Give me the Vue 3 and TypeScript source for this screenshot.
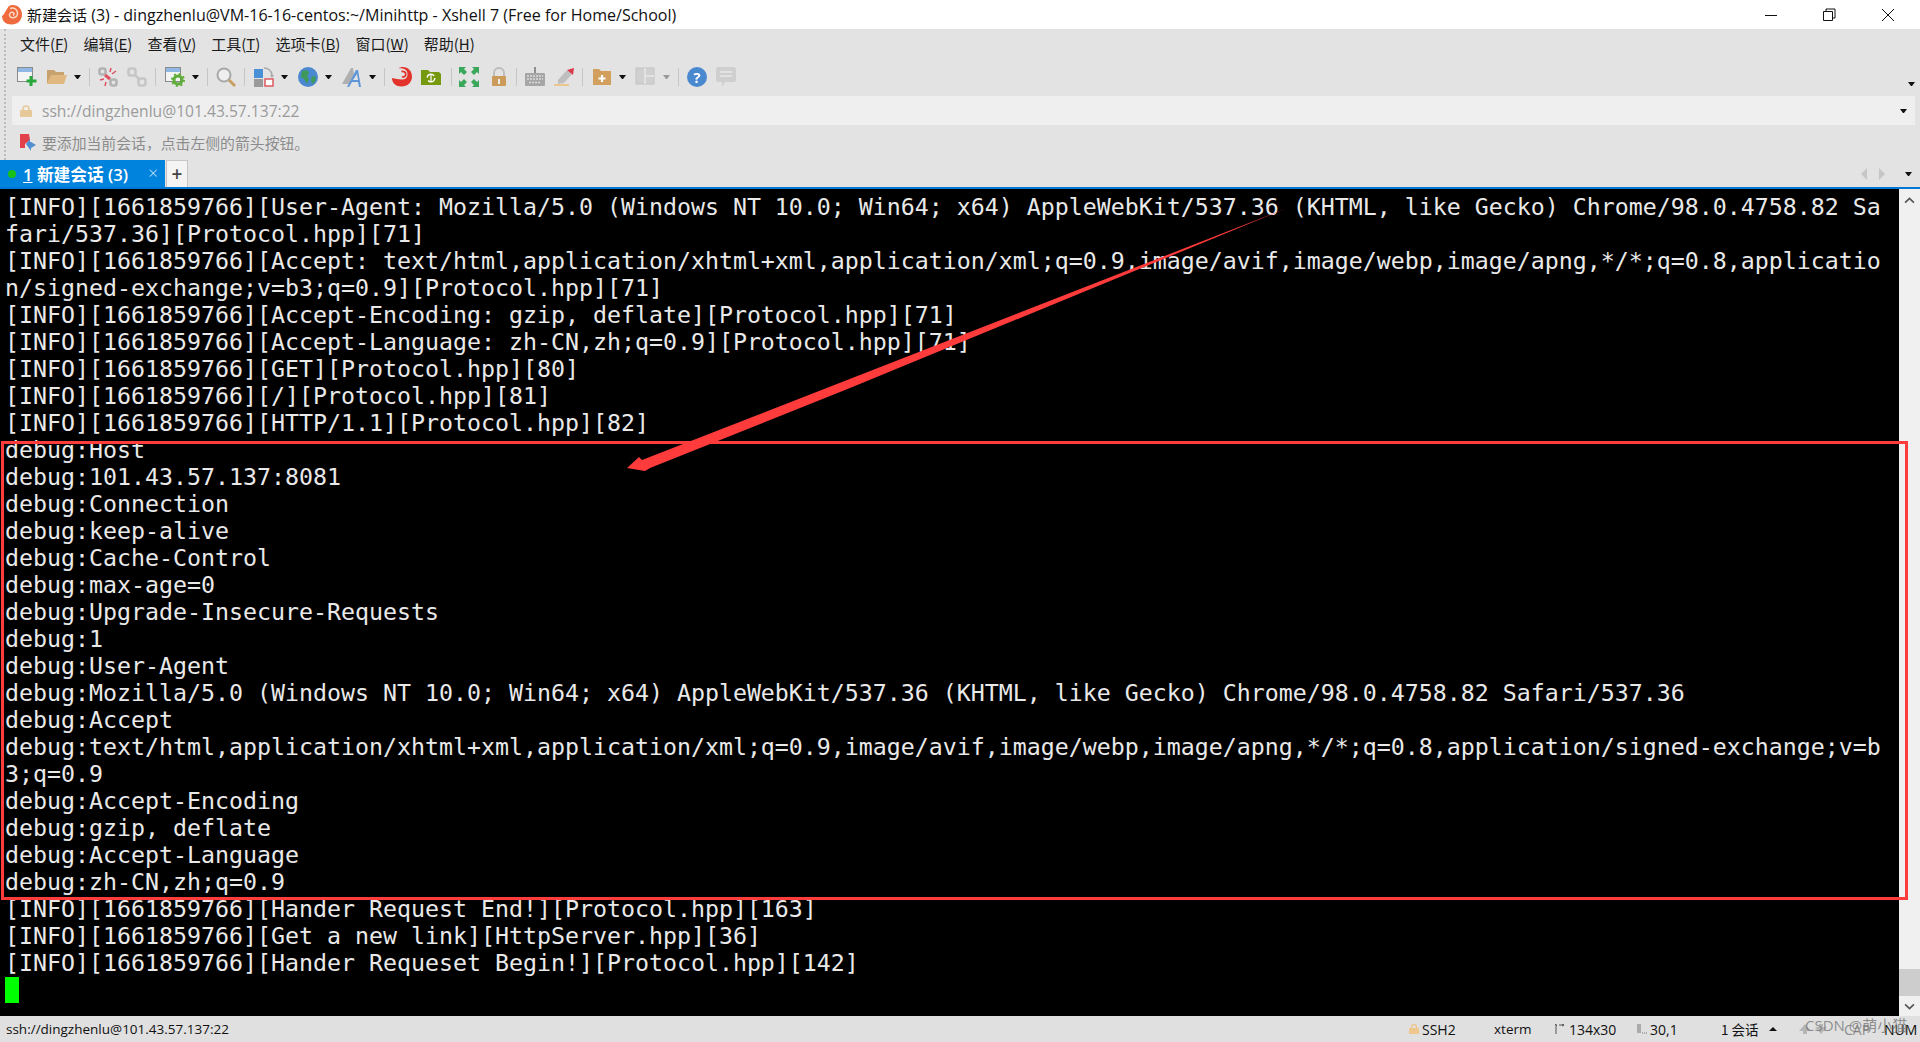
<script setup lang="ts">
const menus: { key: string; label: string; hot: string }[] = [
  { key: 'f', label: '文件', hot: 'F' },
  { key: 'e', label: '编辑', hot: 'E' },
  { key: 'v', label: '查看', hot: 'V' },
  { key: 't', label: '工具', hot: 'T' },
  { key: 'b', label: '选项卡', hot: 'B' },
  { key: 'w', label: '窗口', hot: 'W' },
  { key: 'h', label: '帮助', hot: 'H' },
]

const rows: string[] = [
  '[INFO][1661859766][User-Agent: Mozilla/5.0 (Windows NT 10.0; Win64; x64) AppleWebKit/537.36 (KHTML, like Gecko) Chrome/98.0.4758.82 Sa',
  'fari/537.36][Protocol.hpp][71]',
  '[INFO][1661859766][Accept: text/html,application/xhtml+xml,application/xml;q=0.9,image/avif,image/webp,image/apng,*/*;q=0.8,applicatio',
  'n/signed-exchange;v=b3;q=0.9][Protocol.hpp][71]',
  '[INFO][1661859766][Accept-Encoding: gzip, deflate][Protocol.hpp][71]',
  '[INFO][1661859766][Accept-Language: zh-CN,zh;q=0.9][Protocol.hpp][71]',
  '[INFO][1661859766][GET][Protocol.hpp][80]',
  '[INFO][1661859766][/][Protocol.hpp][81]',
  '[INFO][1661859766][HTTP/1.1][Protocol.hpp][82]',
  'debug:Host',
  'debug:101.43.57.137:8081',
  'debug:Connection',
  'debug:keep-alive',
  'debug:Cache-Control',
  'debug:max-age=0',
  'debug:Upgrade-Insecure-Requests',
  'debug:1',
  'debug:User-Agent',
  'debug:Mozilla/5.0 (Windows NT 10.0; Win64; x64) AppleWebKit/537.36 (KHTML, like Gecko) Chrome/98.0.4758.82 Safari/537.36',
  'debug:Accept',
  'debug:text/html,application/xhtml+xml,application/xml;q=0.9,image/avif,image/webp,image/apng,*/*;q=0.8,application/signed-exchange;v=b',
  '3;q=0.9',
  'debug:Accept-Encoding',
  'debug:gzip, deflate',
  'debug:Accept-Language',
  'debug:zh-CN,zh;q=0.9',
  '[INFO][1661859766][Hander Request End!][Protocol.hpp][163]',
  '[INFO][1661859766][Get a new link][HttpServer.hpp][36]',
  '[INFO][1661859766][Hander Requeset Begin!][Protocol.hpp][142]',
]
</script>

<template>
  <div class="app">
    <header class="title">
      <svg class="logo" viewBox="0 0 20 20">
        <path d="M0 11c0 5 4 8.500 9.500 8.500C15.500 19.500 20 15.500 20 9.500 20 4 16 0 11 0 9 0 7.500.5 6.500 1.500 3.500 6 2 10 0 11z" fill="#ef6a3c" />
        <path d="M8 3.500c4-1.500 8 1 7.500 5.500-.5 3.500-5 5-7.500 2.500C6.500 9.500 8.500 6.500 11 7.500c1.500.6 1.300 2.500 0 3" fill="none" stroke="#ffd9c4" stroke-width="1.500" />
      </svg>
      <span class="title-text"><span class="cjk">新建会话</span> (3) - dingzhenlu@VM-16-16-centos:~/Minihttp - Xshell 7 (Free for Home/School)</span>
      <div class="win">
        <span class="win-btn"><svg width="14" height="14" viewBox="0 0 14 14"><path d="M1 7.500h12" stroke="#111" fill="none" /></svg></span>
        <span class="win-btn"><svg width="14" height="14" viewBox="0 0 14 14"><path d="M1.500 3.500h9v9h-9zM4 3.500v-2.500h9v9h-2.500" stroke="#111" fill="none" /></svg></span>
        <span class="win-btn"><svg width="14" height="14" viewBox="0 0 14 14"><path d="M1 1l12 12M13 1L1 13" stroke="#111" fill="none" /></svg></span>
      </div>
    </header>

    <section class="chrome">
      <i class="grip"></i>
      <nav class="menu">
        <span v-for="m in menus" :key="m.key" class="menu-item">{{ m.label }}(<u>{{ m.hot }}</u>)</span>
      </nav>

      <div class="toolbar">
        <svg class="ic" viewBox="0 0 20 20"><rect x=".5" y=".5" width="15" height="14" fill="#f4f4f4" stroke="#8a8a8a" /><rect x="1" y="1" width="14" height="4" fill="#8fb8e4" /><path d="M14 9v10M9.500 14h10" stroke="#27a83a" stroke-width="3" /></svg>
        <svg class="ic m10" viewBox="0 0 20 20"><path d="M0 3h7l2 2h8v3H5L0 17z" fill="#c8a26e" /><path d="M0 17l4-9h16l-3 9z" fill="#e0b880" /></svg>
        <i class="caret m7"></i>
        <i class="sep m8"></i>
        <svg class="ic m8" viewBox="0 0 20 20"><g fill="none" stroke="#b3b3b3" stroke-width="2.600"><rect x="1.500" y="1.500" width="6" height="6" rx="2" /><rect x="12.500" y="12.500" width="6" height="6" rx="2" /></g><path d="M7 8l5 4" stroke="#e05060" stroke-width="3" /><path d="M13 1l-1 4M18 4l-4 3M2 13l4-1M7 19l1-4" stroke="#e05060" stroke-width="1.500" /></svg>
        <svg class="ic m9 faded" viewBox="0 0 20 20"><g fill="none" stroke="#bbb" stroke-width="2.600"><rect x="1.500" y="1.500" width="7" height="7" rx="2" /><rect x="11.500" y="11.500" width="7" height="7" rx="2" /><path d="M7 7l6 6" /></g></svg>
        <i class="sep m8"></i>
        <svg class="ic m9" viewBox="0 0 20 20"><rect x=".5" y=".5" width="15" height="14" fill="#f4f4f4" stroke="#8a8a8a" /><rect x="1" y="1" width="14" height="4" fill="#8fb8e4" /><circle cx="13" cy="13" r="4" fill="none" stroke="#5fae3a" stroke-width="3" /><circle cx="13" cy="13" r="6" fill="none" stroke="#5fae3a" stroke-width="2" stroke-dasharray="2 2.700" /></svg>
        <i class="caret m7"></i>
        <i class="sep m8"></i>
        <svg class="ic m8" viewBox="0 0 20 20"><circle cx="8" cy="8" r="6.500" fill="#efefef" stroke="#a8a8a8" stroke-width="2" /><path d="M13 13l6 6" stroke="#c9a064" stroke-width="3" /></svg>
        <i class="sep m8"></i>
        <svg class="ic m9" viewBox="0 0 20 20"><rect y="2" width="9" height="9" fill="#4a90d6" /><rect y="12" width="9" height="8" fill="#9a9a9a" /><rect x="11" y="12" width="8" height="7" fill="#fff" stroke="#dd5a60" stroke-width="1.500" /><path d="M10 1c4 0 7 2 8 7" fill="none" stroke="#a9a9a9" stroke-width="1.500" /><path d="M16 8h4l-2 3z" fill="#a9a9a9" /></svg>
        <i class="caret m7"></i>
        <svg class="ic m10" viewBox="0 0 20 20"><circle cx="10" cy="10" r="10" fill="#4a88d0" /><path d="M4 4l5-1 2 3-2 3 2 3-2 5-3-5-3-2zM14 9l4 1-1 5-3 2-1-4z" fill="#3f9a5a" /></svg>
        <i class="caret m7"></i>
        <svg class="ic m10" viewBox="0 0 20 20"><path d="M0 17L9 1h2l1 6-5 10" fill="#b0b0b0" /><path d="M5 20L14 3h2l3 17h-2l-1-5h-6l-3 5zM11 13h5l-1-6z" fill="#5f96d8" fill-rule="evenodd" /></svg>
        <i class="caret m7"></i>
        <i class="sep m8"></i>
        <svg class="ic m7" viewBox="0 0 20 20"><path d="M0 11c0 5 4 8.500 9.500 8.500C15.500 19.500 20 15.500 20 9.500 20 4 16 0 11 0 9 0 7.500.5 6.500 1.500c5.500-1 9.500 2 9 6.500-.4 3-2.500 4.500-5.500 4.500-4 0-6.500-1-10-1.500z" fill="#e3322b" /><path d="M9.500 4.500c2.500-.5 4.500 1 4.300 3.200-.2 1.800-2.300 2.800-3.800 1.800" fill="none" stroke="#e3322b" stroke-width="1.800" /></svg>
        <svg class="ic m9" viewBox="0 0 20 20"><path d="M0 3h7l2 2h9l2 2v11H0z" fill="#77990f" /><circle cx="10" cy="11" r="3.800" fill="none" stroke="#fff" stroke-width="1.400" stroke-dasharray="9 3" /><path d="M10 7v8" stroke="#fff" stroke-width="1.200" /></svg>
        <i class="sep m10"></i>
        <svg class="ic m7" viewBox="0 0 20 20"><g fill="#3aa85a"><path d="M0 0h7L5 2l3 3-3 3-3-3-2 2zM20 0v7l-2-2-3 3-3-3 3-3-2-2zM0 20v-7l2 2 3-3 3 3-3 3 2 2zM20 20h-7l2-2-3-3 3-3 3 3 2-2z" /></g></svg>
        <svg class="ic m10" viewBox="0 0 20 20"><path d="M5 9V6a5 5 0 0 1 10 0v3" fill="none" stroke="#bdbdbd" stroke-width="2" /><rect x="3" y="9" width="14" height="10" rx="1" fill="#cc9b5a" /><rect x="9" y="12" width="2" height="5" fill="#eee" /></svg>
        <i class="sep m7"></i>
        <svg class="ic m8" viewBox="0 0 20 20"><rect y="6" width="20" height="13" rx="1" fill="#a6a6a6" /><path d="M10 0v6" stroke="#8f8f8f" stroke-width="2" /><path d="M2 9h16M2 12h16M4 15.500h12" stroke="#dcdcdc" stroke-width="1.500" stroke-dasharray="2 1" /></svg>
        <svg class="ic m9" viewBox="0 0 20 20"><path d="M4 13L13 3l5 4-8 9-6 1z" fill="#bfbfbf" /><path d="M13 3l7-2-1 7z" fill="#d9394a" /><rect x="0" y="17" width="15" height="2" fill="#ecc68f" /></svg>
        <i class="sep m8"></i>
        <svg class="ic m9" viewBox="0 0 20 20"><path d="M1 2h6l2 2h10v14H1z" fill="#d29f5e" /><path d="M10 8v7M6.500 11.500h7" stroke="#fff" stroke-width="2.200" /></svg>
        <i class="caret m7"></i>
        <svg class="ic m10" viewBox="0 0 20 20"><rect width="18" height="16" y="1" fill="#d0d0d0" stroke="#c4c4c4" /><path d="M9 1v16M9 9h9" stroke="#e8e8e8" stroke-width="1.500" /></svg>
        <i class="caret m7 muted"></i>
        <i class="sep m8"></i>
        <svg class="ic m8" viewBox="0 0 20 20"><circle cx="10" cy="10" r="10" fill="#4a88d0" /><text x="10" y="15.500" class="help-q">?</text></svg>
        <svg class="ic m9" viewBox="0 0 20 20"><path d="M2 0h16a2 2 0 0 1 2 2v11a2 2 0 0 1-2 2H9l-3 5v-5H2a2 2 0 0 1-2-2V2a2 2 0 0 1 2-2z" fill="#cfcfcf" /><path d="M4 5h12M4 9h12" stroke="#e9e9e9" stroke-width="1.500" /></svg>
        <i class="caret end small"></i>
      </div>

      <div class="address">
        <svg class="addr-lock" viewBox="0 0 12 12"><path d="M3 6V4a3 3 0 0 1 6 0v2" fill="none" stroke="#e7c898" stroke-width="1.600" /><rect y="5" width="12" height="7" rx="1" fill="#e7c898" /></svg>
        <span class="addr-text">ssh://dingzhenlu@101.43.57.137:22</span>
        <i class="caret end"></i>
      </div>

      <div class="hint">
        <svg class="hint-ic" viewBox="0 0 16 17"><path d="M0 0h9l1 6-5 4v4H0z" fill="#e2404a" /><path d="M6 10l4-5v3h1l5 3-5 3v3z" fill="#4f8ed0" /></svg>
        <span>要添加当前会话，点击左侧的箭头按钮。</span>
      </div>

      <div class="tabs">
        <div class="tab">
          <i class="dot"></i>
          <span class="tab-text"><u>1</u> 新建会话 (3)</span>
          <span class="tab-x">×</span>
        </div>
        <div class="plus">+</div>
        <div class="tab-nav">
          <i class="tri left"></i>
          <i class="tri right"></i>
          <i class="caret"></i>
        </div>
      </div>
    </section>

    <main class="main">
      <div class="term">
        <div v-for="(r, i) in rows" :key="i" class="row">{{ r }}</div>
        <div class="row"><i class="cursor"></i></div>
      </div>
      <aside class="scroll">
        <svg class="chev" viewBox="0 0 10 6"><path d="M1 5l4-4 4 4" fill="none" stroke="#555" stroke-width="1.500" /></svg>
        <i class="thumb"></i>
        <svg class="chev" viewBox="0 0 10 6"><path d="M1 1l4 4 4-4" fill="none" stroke="#555" stroke-width="1.500" /></svg>
      </aside>
    </main>

    <footer class="status">
      <span class="st-addr">ssh://dingzhenlu@101.43.57.137:22</span>
      <svg class="st-lock" viewBox="0 0 10 10"><path d="M2.500 5V3a2.500 2.500 0 0 1 5 0v2" fill="none" stroke="#eec78f" stroke-width="1.400" /><rect y="4" width="10" height="6" fill="#eec78f" /></svg>
      <span class="st-ssh">SSH2</span>
      <span class="st-xterm">xterm</span>
      <svg class="st-ic" viewBox="0 0 10 10"><path d="M2 0v10M0 8h0M5 1h5M1 0L3 2M8 0l2 1-2 1" fill="none" stroke="#555" /></svg>
      <span class="st-size">134x30</span>
      <svg class="st-ic2" viewBox="0 0 10 10"><path d="M1 0v9M3 0v9M5 9h1M7 9h1M9 9h1" stroke="#777" fill="none" /></svg>
      <span class="st-pos">30,1</span>
      <span class="st-sess">1 会话</span>
      <i class="st-up"></i>
      <svg class="st-arrows" viewBox="0 0 30 12"><path d="M6 1l6 7H8v3H4V8H0zM22 11l6-7h-4V1h-4v3h-4z" fill="#b5b5b5" /></svg>
      <span class="st-cap">CAP</span>
      <span class="st-num">NUM</span>
    </footer>

    <svg class="notes" viewBox="0 0 1920 1042" width="1920" height="1042">
      <rect x="2.500" y="442.500" width="1904" height="456" fill="none" stroke="#ff3b3b" stroke-width="3" />
      <path d="M1285 209 642 460 639 457 627 468 645 471 650 468 850 388z" fill="#ff3b3b" />
    </svg>
    <span class="watermark">CSDN @萌小猫</span>
  </div>
</template>

<style>
html, body { margin: 0; background: #000; overflow: hidden; }
</style>

<style scoped>
.app {
  position: relative;
  width: 1920px;
  height: 1042px;
  overflow: hidden;
  display: flex;
  flex-direction: column;
  font-family: "Open Sans", "Noto Sans CJK SC", sans-serif;
  color: #111;
}
.title {
  height: 29px;
  flex: none;
  background: #fff;
  display: flex;
  align-items: center;
  padding-left: 2px;
  font-size: 16.05px;
}
.cjk { font-size: 15px; }
.logo { width: 20px; height: 20px; margin-right: 5px; }
.title-text { white-space: nowrap; }
.win { margin-left: auto; display: flex; padding-right: 3px; }
.win-btn { width: 58.5px; height: 29px; display: flex; align-items: center; justify-content: center; }

.chrome { position: relative; flex: none; height: 158px; background: #e3e3e3; display: flex; flex-direction: column; }
.grip { position: absolute; left: 4px; top: 0; height: 131px; width: 2px; border-left: 2px dotted #bdbdbd; }
.menu { height: 31px; display: flex; align-items: center; padding: 0 0 2px 20px; box-sizing: border-box; gap: 15px; font-size: 15px; font-family: "Noto Sans CJK SC", "Noto Sans", sans-serif; color: #1a1a1a; }
.menu-item { white-space: nowrap; }

.toolbar { height: 36px; display: flex; align-items: center; padding: 0 5px 2px 17px; box-sizing: border-box; }
.ic { width: 20px; height: 20px; flex: none; overflow: visible; filter: blur(.3px); }
.faded { opacity: .7; }
.m7 { margin-left: 7px; }
.m8 { margin-left: 8px; }
.m9 { margin-left: 9px; }
.m10 { margin-left: 10px; }
.caret { width: 1px; height: 0; flex: none; border-left: 3px solid transparent; border-right: 3px solid transparent; border-top: 4px solid #111; display: block; }
.caret.muted { border-top-color: #999; }
.caret.end { margin-left: auto; }
.caret.small { margin-top: 13px; }
.sep { width: 1px; height: 18px; background: #c6c6c6; flex: none; display: block; }
.help-q { fill: #fff; font: bold 15px "Open Sans", sans-serif; text-anchor: middle; }

.address { margin: 0 5px 0 12px; height: 29px; background: #efefef; display: flex; align-items: center; padding: 0 8px 0 8px; font-size: 15.6px; color: #9b9b9b; }
.addr-lock { width: 12px; height: 12px; margin-right: 10px; }
.addr-text { white-space: nowrap; }

.hint { height: 35px; display: flex; align-items: center; padding-left: 20px; font-size: 14.85px; color: #8c8c8c; font-family: "Noto Sans CJK SC", sans-serif; }
.hint-ic { width: 16px; height: 17px; margin-right: 6px; }

.tabs { height: 27px; display: flex; align-items: stretch; }
.tab { width: 165px; background: #0083dd; display: flex; align-items: center; color: #fff; font-size: 16.7px; font-weight: 600; position: relative; }
.dot { width: 8px; height: 8px; border-radius: 50%; background: #18c018; margin-left: 8px; display: block; }
.tab-text { margin-left: 7px; white-space: nowrap; font-family: "Open Sans", "Noto Sans CJK SC", sans-serif; }
.tab-x { position: absolute; right: 7px; top: 1px; font-weight: 300; color: #cfe6f7; font-size: 17px; }
.plus { margin-left: 1px; width: 20px; background: #f4f4f4; border: 1px solid #c5c5c5; border-bottom: 0; display: flex; align-items: center; justify-content: center; font-size: 19px; font-weight: 600; color: #444; line-height: 1; }
.tab-nav { margin-left: auto; display: flex; align-items: center; padding-right: 8px; }
.tri { width: 0; height: 0; border-top: 6px solid transparent; border-bottom: 6px solid transparent; display: block; }
.tri.left { border-right: 6px solid #c6c6c6; }
.tri.right { border-left: 6px solid #c6c6c6; margin-left: 12px; margin-right: 20px; }

.main { flex: 1; min-height: 0; display: flex; border-top: 2px solid #0078d7; background: #000; }
.term { flex: 1; min-width: 0; padding: 4px 0 0 5px; font-family: "DejaVu Sans Mono", monospace; font-size: 23.26px; line-height: 27px; color: #e9e9e9; white-space: pre; overflow: hidden; }
.row { height: 27px; }
.cursor { display: block; width: 14px; height: 26px; margin-top: 1px; background: #00ff00; }
.scroll { width: 21px; flex: none; background: #f0f0f0; display: flex; flex-direction: column; align-items: center; padding: 8px 0 6px; box-sizing: border-box; }
.chev { width: 11px; height: 7px; flex: none; }
.thumb { margin-top: auto; width: 21px; height: 27px; background: #cdcdcd; display: block; margin-bottom: 7px; }

.status { height: 26px; flex: none; background: #e0e0e0; display: flex; align-items: center; font-size: 14px; white-space: nowrap; }
.status > span { flex: none; }
.st-addr { margin-left: 6px; width: 223px; font-size: 13.5px; }
.st-lock { width: 10px; height: 10px; margin-left: 1180px; }
.st-ssh { margin-left: 3px; width: 34px; }
.st-xterm { margin-left: 38px; width: 36px; font-size: 13.5px; }
.st-ic { width: 10px; height: 10px; margin-left: 24px; }
.st-size { margin-left: 5px; width: 46px; }
.st-ic2 { width: 10px; height: 10px; margin-left: 22px; }
.st-pos { margin-left: 3px; width: 25px; }
.st-sess { margin-left: 46px; width: 38px; font-family: "Noto Sans CJK SC", sans-serif; font-size: 13.5px; }
.st-up { margin-left: 10px; width: 0; height: 0; border-left: 4px solid transparent; border-right: 4px solid transparent; border-bottom: 4px solid #111; display: block; }
.st-arrows { width: 30px; height: 12px; margin-left: 22px; }
.st-cap { margin-left: 15px; width: 35px; color: #8d8d8d; }
.st-num { margin-left: 5px; color: #111; }

.notes { position: absolute; left: 0; top: 0; pointer-events: none; }
.watermark { position: absolute; left: 1805px; top: 1014px; font-size: 15px; color: rgba(120, 120, 120, .8); white-space: nowrap; }
</style>
